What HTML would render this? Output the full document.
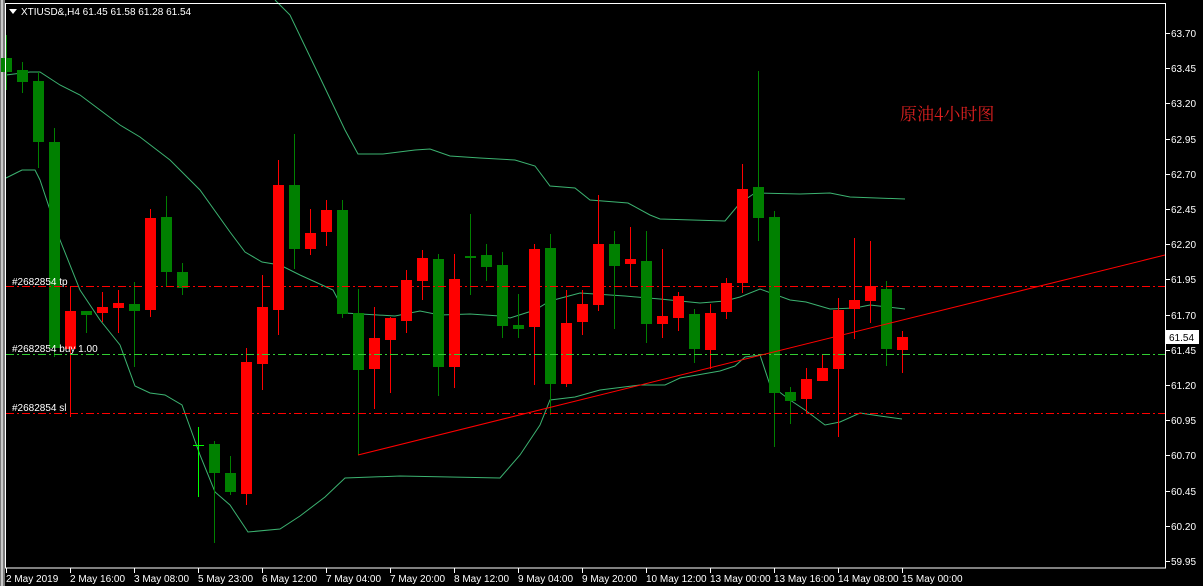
<!DOCTYPE html>
<html><head><meta charset="utf-8"><style>
html,body{margin:0;padding:0;background:#000;width:1203px;height:586px;overflow:hidden}
svg{display:block}
text{font-family:"Liberation Sans",sans-serif;font-size:10px;fill:#fff}
</style></head><body>
<svg id="s" width="1203" height="586" xmlns="http://www.w3.org/2000/svg">
<rect width="1203" height="586" fill="#000"/>
<rect x="0" y="0" width="5" height="586" fill="#7a7a7a"/>
<rect x="1" y="0" width="2" height="586" fill="#c8c8c8"/>
<g id="bb" fill="none" stroke="#3cb371" stroke-width="1"></g>
<g id="cd"></g>
<line x1="6" y1="286.5" x2="1165" y2="286.5" stroke="#ff0000" stroke-dasharray="8,3,2,3"/>
<line x1="6" y1="354.5" x2="1165" y2="354.5" stroke="#32cd32" stroke-dasharray="8,3,2,3"/>
<line x1="6" y1="413.5" x2="1165" y2="413.5" stroke="#ff0000" stroke-dasharray="8,3,2,3"/>
<line x1="358" y1="455" x2="1165" y2="255" stroke="#ff0000" stroke-width="1"/>
<text x="12" y="285">#2682854 tp</text>
<text x="12" y="352">#2682854 buy 1.00</text>
<text x="12" y="411">#2682854 sl</text>
<rect x="5.5" y="3.5" width="1160" height="564.5" fill="none" stroke="#fff"/>
<path d="M9 9 L17 9 L13 14 Z" fill="#fff"/>
<text x="21" y="15">XTIUSD&amp;,H4  61.45 61.58 61.28 61.54</text>
<text x="900" y="120" style="font-family:'Noto Serif CJK SC','Liberation Serif',serif;font-size:17px;fill:#e02020">原油4小时图</text>
<g id="ax"></g>
<rect x="1166" y="330" width="33" height="14" fill="#fff"/>
<text x="1169" y="341" style="fill:#000">61.54</text>
</svg>
<script>
var NS="http://www.w3.org/2000/svg";
function el(p,t,a,txt){var e=document.createElementNS(NS,t);for(var k in a)e.setAttribute(k,a[k]);if(txt)e.textContent=txt;p.appendChild(e);return e;}
var C=[[6,'g',35,90,58,72],[22,'g',62,93,70,82],[38,'g',72,168,81,142],[54,'g',128,357,142,348],[70,'r',287,417,311,349],[86,'g',311,333,311,315],[102,'r',292,322,307,313],[118,'r',290,333,303,308],[134,'g',282,367,304,311],[150,'r',209,317,218,310],[166,'g',196,286,217,272],[182,'g',263,295,272,288],[198,'d',427,497,445,445],[214,'g',441,543,444,473],[230,'g',456,495,473,492],[246,'r',348,505,362,494],[262,'r',275,390,307,364],[278,'r',160,335,185,310],[294,'g',134,269,185,249],[310,'r',209,255,233,249],[326,'r',200,246,210,232],[342,'g',200,318,210,314],[358,'g',289,455,313,370],[374,'r',307,409,338,369],[390,'r',317,393,318,340],[406,'r',270,333,280,321],[422,'r',250,300,258,281],[438,'g',254,396,259,367],[454,'r',254,388,279,367],[470,'g',214,295,256,258],[486,'g',244,281,255,267],[502,'g',252,338,265,326],[518,'g',294,338,325,329],[534,'r',244,385,249,327],[550,'g',234,415,248,384],[566,'r',290,387,323,384],[582,'r',290,335,304,322],[598,'r',195,311,244,305],[614,'g',231,329,244,266],[630,'r',227,286,259,264],[646,'g',231,343,261,324],[662,'r',249,338,316,324],[678,'r',292,331,296,318],[694,'g',309,363,314,349],[710,'r',304,369,313,350],[726,'r',278,319,283,312],[742,'r',164,293,189,283],[758,'g',71,241,187,218],[774,'g',211,447,217,393],[790,'g',387,424,392,401],[806,'r',368,413,379,399],[822,'r',355,381,368,381],[838,'r',298,437,310,369],[854,'r',238,339,300,309],[870,'r',241,323,286,301],[886,'g',281,366,289,349],[902,'r',331,373,337,350]];
var cd=document.getElementById('cd');
C.forEach(function(c){var col=c[1]=='r'?'#ff0000':(c[1]=='d'?'#00ff00':'#008000');
el(cd,'line',{x1:c[0]+.5,x2:c[0]+.5,y1:c[2],y2:c[3],stroke:col});
if(c[1]=='d'){el(cd,'line',{x1:c[0]-5,x2:c[0]+6,y1:c[4]+.5,y2:c[4]+.5,stroke:col});}
else el(cd,'rect',{x:c[0]-5,y:c[4],width:11,height:Math.max(2,c[5]-c[4]),fill:col});});
var up=[[275,0],[290,15],[325,88],[345,130],[358,154],[383,154],[415,150],[430,149],[450,156],[480,158],[515,160],[535,166],[550,186],[575,188],[590,200],[628,203],[650,215],[660,219],[725,221],[740,203],[755,193],[800,194],[830,193],[850,197],[905,199]];
var md=[[6,75],[30,72],[40,72],[60,85],[80,95],[100,110],[120,125],[140,137],[170,160],[200,190],[230,232],[245,252],[262,262],[280,265],[300,275],[333,290],[345,313],[395,316],[420,311],[440,315],[470,314],[500,316],[510,318],[535,310],[550,301],[580,293],[625,296],[660,299],[700,303],[725,301],[740,297],[760,289],[790,300],[806,302],[830,309],[855,308],[870,305],[905,309]];
var lo=[[6,178],[22,170],[35,170],[40,180],[60,240],[80,290],[100,320],[120,345],[135,386],[150,393],[165,395],[182,405],[200,455],[215,492],[230,505],[248,532],[280,529],[300,516],[325,497],[345,478],[400,476],[500,478],[520,455],[540,425],[550,400],[575,397],[600,390],[640,385],[665,385],[680,378],[720,371],[735,366],[745,357],[760,355],[770,385],[790,400],[805,410],[825,425],[840,422],[860,413],[880,416],[902,419]];
var bb=document.getElementById('bb');
[up,md,lo].forEach(function(a){el(bb,'polyline',{points:a.map(function(p){return p.join(',')}).join(' ')});});
var ax=document.getElementById('ax');
var P=['63.70','63.45','63.20','62.95','62.70','62.45','62.20','61.95','61.70','61.45','61.20','60.95','60.70','60.45','60.20','59.95'];
P.forEach(function(p,i){var y=Math.round(33+i*35.2);el(ax,'line',{x1:1166,x2:1170,y1:y+.5,y2:y+.5,stroke:'#fff'});if(p!='61.54')el(ax,'text',{x:1171,y:y+4},p);});
var T=['2 May 2019','2 May 16:00','3 May 08:00','5 May 23:00','6 May 12:00','7 May 04:00','7 May 20:00','8 May 12:00','9 May 04:00','9 May 20:00','10 May 12:00','13 May 00:00','13 May 16:00','14 May 08:00','15 May 00:00'];
T.forEach(function(t,i){var x=6+i*64;el(ax,'line',{x1:x+.5,x2:x+.5,y1:568,y2:573,stroke:'#fff'});el(ax,'text',{x:x,y:582},t);});
</script>
</body></html>
